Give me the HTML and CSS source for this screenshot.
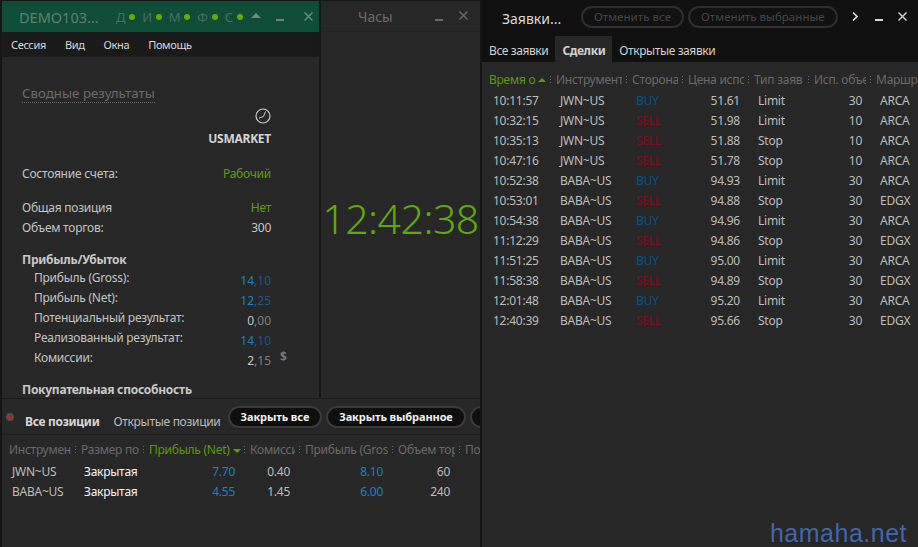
FILE: index.html
```html
<!DOCTYPE html>
<html lang="ru">
<head>
    <meta charset="UTF-8">
    <title>Сводные результаты</title>
    <link rel="stylesheet" href="styles.css">
</head>
<body>
    <div class="desktop">
        <div class="left-side">
            <div class="top-row">
                <div class="summary-win">
                    <div class="title-green">
                        <span class="title-name">DEMO103...</span>
                        <span class="leds">
                            <span class="led">Д</span>
                            <span class="led">И</span>
                            <span class="led">М</span>
                            <span class="led">Ф</span>
                            <span class="led">С</span>
                        </span>
                        <span class="arrow-up"></span>
                        <span class="win-min"></span>
                        <svg class="win-close" width="9" height="9" viewBox="0 0 9 9"><path d="M0.5 0.5L8.5 8.5M8.5 0.5L0.5 8.5" stroke="currentColor" stroke-width="1.4"/></svg>
                    </div>
                    <div class="menu">
                        <span>Сессия</span>
                        <span>Вид</span>
                        <span>Окна</span>
                        <span>Помощь</span>
                    </div>
                    <div class="summary">
                        <div class="summary-title"><span>Сводные результаты</span></div>
                        <div class="market">
                            <svg width="16" height="16" viewBox="0 0 16 16">
                                <circle cx="8" cy="8" r="7" fill="none" stroke="#c8c8c8" stroke-width="1.2"/>
                                <path d="M10.5 3.5 L8.5 8.5 L4 10" fill="none" stroke="#c8c8c8" stroke-width="1"/>
                            </svg>
                            <div class="market-name">USMARKET</div>
                        </div>
                        <div class="row state"><span>Состояние счета:</span><span class="green">Рабочий</span></div>
                        <div class="row pos"><span>Общая позиция</span><span class="green">Нет</span></div>
                        <div class="row"><span>Объем торгов:</span><span>300</span></div>
                        <div class="group-title">Прибыль/Убыток</div>
                        <div class="row sub"><span>Прибыль (Gross):</span><span class="num blue">14<i>,10</i></span></div>
                        <div class="row sub"><span>Прибыль (Net):</span><span class="num blue">12<i>,25</i></span></div>
                        <div class="row sub"><span>Потенциальный результат:</span><span class="num">0<i>,00</i></span></div>
                        <div class="row sub"><span>Реализованный результат:</span><span class="num blue">14<i>,10</i></span></div>
                        <div class="row sub"><span>Комиссии:</span><span class="num">2<i>,15</i><b class="dollar">$</b></span></div>
                        <div class="group-title buy-power">Покупательная способность</div>
                    </div>
                </div>
                <div class="clock-win">
                    <div class="title-dark">
                        <span class="clock-name">Часы</span>
                        <span class="win-min"></span>
                        <svg class="win-close" width="9" height="9" viewBox="0 0 9 9"><path d="M0.5 0.5L8.5 8.5M8.5 0.5L0.5 8.5" stroke="currentColor" stroke-width="1.4"/></svg>
                    </div>
                    <div class="clock-time">12:42:38</div>
                </div>
            </div>
            <div class="positions">
                <div class="pos-bar">
                    <span class="red-dot"></span>
                    <span class="pos-tab bold">Все позиции</span>
                    <span class="pos-tab">Открытые позиции</span>
                    <button class="pill">Закрыть все</button>
                    <button class="pill">Закрыть выбранное</button>
                    <button class="pill cut"></button>
                </div>
                <table class="grid pos-grid">
                    <colgroup>
                        <col class="p1"><col class="p2"><col class="p3"><col class="p4"><col class="p5"><col class="p6"><col class="p7">
                    </colgroup>
                    <tr>
                        <th><div>Инструмен</div></th>
                        <th><div>Размер поз</div></th>
                        <th class="sorted"><div>Прибыль (Net) <span class="caret-down"></span></div></th>
                        <th><div>Комисси</div></th>
                        <th><div>Прибыль (Gros</div></th>
                        <th><div>Объем тор</div></th>
                        <th class="last"><div>По</div></th>
                    </tr>
                    <tr>
                        <td>JWN~US</td><td class="white">Закрытая</td><td class="r blue">7.70</td><td class="r">0.40</td><td class="r blue">8.10</td><td class="r">60</td><td></td>
                    </tr>
                    <tr>
                        <td>BABA~US</td><td class="white">Закрытая</td><td class="r blue">4.55</td><td class="r">1.45</td><td class="r blue">6.00</td><td class="r">240</td><td></td>
                    </tr>
                </table>
            </div>
        </div>
        <div class="orders-win">
            <div class="orders-top">
                <span class="orders-name">Заявки...</span>
                <button class="pill off first">Отменить все</button>
                <button class="pill off">Отменить выбранные</button>
                <svg class="chev" width="6" height="9" viewBox="0 0 6 9"><path d="M1 0.5L5 4.5L1 8.5" fill="none" stroke="currentColor" stroke-width="1.6"/></svg>
                <span class="win-min bright"></span>
                <svg class="win-close bright" width="9" height="9" viewBox="0 0 9 9"><path d="M0.5 0.5L8.5 8.5M8.5 0.5L0.5 8.5" stroke="currentColor" stroke-width="1.4"/></svg>
            </div>
            <div class="orders-tabs">
                <span>Все заявки</span>
                <span class="tab-on">Сделки</span>
                <span>Открытые заявки</span>
            </div>
            <div class="orders-body">
                <table class="grid ord-grid">
                    <colgroup>
                        <col class="o1"><col class="o2"><col class="o3"><col class="o4"><col class="o5"><col class="o6"><col class="o7">
                    </colgroup>
                    <tr>
                        <th class="sorted"><div class="time-head">Время о<span class="caret-up"></span></div></th>
                        <th><div>Инструмент</div></th>
                        <th><div>Сторона</div></th>
                        <th><div>Цена испс</div></th>
                        <th><div>Тип заяв</div></th>
                        <th><div>Исп. объе</div></th>
                        <th class="last"><div>Маршр</div></th>
                    </tr>
                    <tr><td>10:11:57</td><td>JWN~US</td><td class="buy">BUY</td><td class="r">51.61</td><td>Limit</td><td class="r">30</td><td>ARCA</td></tr>
                    <tr><td>10:32:15</td><td>JWN~US</td><td class="sell">SELL</td><td class="r">51.98</td><td>Limit</td><td class="r">10</td><td>ARCA</td></tr>
                    <tr><td>10:35:13</td><td>JWN~US</td><td class="sell">SELL</td><td class="r">51.88</td><td>Stop</td><td class="r">10</td><td>ARCA</td></tr>
                    <tr><td>10:47:16</td><td>JWN~US</td><td class="sell">SELL</td><td class="r">51.78</td><td>Stop</td><td class="r">10</td><td>ARCA</td></tr>
                    <tr><td>10:52:38</td><td>BABA~US</td><td class="buy">BUY</td><td class="r">94.93</td><td>Limit</td><td class="r">30</td><td>ARCA</td></tr>
                    <tr><td>10:53:01</td><td>BABA~US</td><td class="sell">SELL</td><td class="r">94.88</td><td>Stop</td><td class="r">30</td><td>EDGX</td></tr>
                    <tr><td>10:54:38</td><td>BABA~US</td><td class="buy">BUY</td><td class="r">94.96</td><td>Limit</td><td class="r">30</td><td>ARCA</td></tr>
                    <tr><td>11:12:29</td><td>BABA~US</td><td class="sell">SELL</td><td class="r">94.86</td><td>Stop</td><td class="r">30</td><td>EDGX</td></tr>
                    <tr><td>11:51:25</td><td>BABA~US</td><td class="buy">BUY</td><td class="r">95.00</td><td>Limit</td><td class="r">30</td><td>ARCA</td></tr>
                    <tr><td>11:58:38</td><td>BABA~US</td><td class="sell">SELL</td><td class="r">94.89</td><td>Stop</td><td class="r">30</td><td>EDGX</td></tr>
                    <tr><td>12:01:48</td><td>BABA~US</td><td class="buy">BUY</td><td class="r">95.20</td><td>Limit</td><td class="r">30</td><td>ARCA</td></tr>
                    <tr><td>12:40:39</td><td>BABA~US</td><td class="sell">SELL</td><td class="r">95.66</td><td>Stop</td><td class="r">30</td><td>EDGX</td></tr>
                </table>
                <div class="watermark">hamaha.net</div>
            </div>
        </div>
    </div>
</body>
</html>
```

FILE: styles.css
```css
html, body {
    margin: 0;
    padding: 0;
    height: 100%;
    overflow: hidden;
}
body {
    font-family: "Noto Sans", "Open Sans", sans-serif;
    font-size: 12px;
    letter-spacing: -0.25px;
    background: #161616;
    color: #c4c4c4;
}
.desktop {
    display: flex;
    width: 918px;
    height: 547px;
    padding: 1px 0 0 2px;
    box-sizing: border-box;
}
.left-side {
    width: 478px;
    display: flex;
    flex-direction: column;
    overflow: hidden;
}
.top-row {
    display: flex;
    height: 397px;
}
.summary-win {
    width: 317px;
    background: #272727;
    overflow: hidden;
}
.title-green {
    display: flex;
    align-items: center;
    height: 31px;
    background: #0f4d38;
    color: #5f7f73;
}
.title-name {
    font-size: 14.5px;
    margin-left: 17px;
    width: 97px;
    letter-spacing: 0;
}
.leds {
    display: flex;
    gap: 7px;
}
.led {
    font-size: 13px;
    display: flex;
    align-items: center;
    gap: 4px;
    color: #4b6f61;
}
.led::after {
    content: "";
    width: 6px;
    height: 6px;
    border-radius: 50%;
    background: #6aa800;
}
.arrow-up {
    width: 0;
    height: 0;
    border-left: 5px solid transparent;
    border-right: 5px solid transparent;
    border-bottom: 5px solid #6d8a7e;
    margin-left: 8px;
    margin-top: -3px;
}
.win-min {
    width: 8px;
    height: 2px;
    background: #6a6a6a;
    margin-left: 15px;
    margin-top: 7px;
}
.title-green .win-min {
    background: #6d8a7e;
}
.win-close {
    color: #6a6a6a;
    margin-left: 20px;
    margin-top: -1px;
    flex: none;
}
.title-green .win-close {
    color: #6d8a7e;
}
.menu {
    display: flex;
    align-items: center;
    height: 25px;
    background: #1a1a1a;
    color: #d8d8d8;
    font-size: 11px;
    letter-spacing: -0.35px;
    padding-left: 9px;
    gap: 19px;
}
.summary {
    padding: 0 48px 0 20px;
}
.summary-title {
    margin-top: 26px;
    font-size: 13.3px;
    line-height: 20px;
    color: #6c6c6c;
    letter-spacing: 0;
}
.summary-title span {
    border-bottom: 1px dotted #6c6c6c;
}
.market {
    text-align: right;
    margin-top: 5px;
    height: 36px;
}
.market svg {
    display: block;
    margin-left: auto;
}
.market-name {
    font-weight: bold;
    color: #d4d4d4;
    line-height: 20px;
    margin-top: 5px;
}
.row {
    display: flex;
    justify-content: space-between;
    height: 20px;
    line-height: 20px;
}
.state {
    margin-top: 20px;
}
.pos {
    margin-top: 14px;
}
.green {
    color: #5f9e0a;
}
.blue {
    color: #1b7fcf;
}
.group-title {
    font-weight: bold;
    line-height: 20px;
    margin-top: 12px;
    color: #c8c8c8;
}
.group-title.buy-power {
    margin-top: 12px;
}
.sub {
    padding-left: 12px;
    margin-top: -2px;
    margin-bottom: 2px;
}
.group-title + .sub {
    margin-top: -2px;
}
.num {
    position: relative;
    top: 3px;
    letter-spacing: 0;
}
.num i {
    font-style: normal;
    opacity: 0.55;
}
.dollar {
    position: absolute;
    left: calc(100% + 9px);
    top: -4px;
    font-weight: bold;
    color: #777;
}
.clock-win {
    width: 159px;
    margin-left: 2px;
    background: #272727;
    overflow: hidden;
}
.title-dark {
    display: flex;
    align-items: center;
    height: 31px;
    border-bottom: 1px solid #222;
    box-sizing: border-box;
}
.clock-name {
    font-size: 14px;
    color: #6a6a6a;
    margin-left: 37px;
    width: 49px;
    letter-spacing: 0;
}
.title-dark .win-min {
    margin-left: 28px;
}
.title-dark .win-close {
    margin-left: 16px;
}
.clock-time {
    font-size: 41px;
    font-weight: 300;
    color: #5fa80f;
    line-height: 50px;
    margin-top: 161px;
    text-align: center;
    white-space: nowrap;
    letter-spacing: -0.5px;
}
.positions {
    flex: 1;
    background: #272727;
    border-top: 1px solid #1c1c1c;
    overflow: hidden;
}
.pos-bar {
    display: flex;
    align-items: center;
    height: 35px;
    border-bottom: 1px solid #1e1e1e;
    white-space: nowrap;
}
.red-dot {
    flex: none;
    width: 4px;
    height: 4px;
    border-radius: 50%;
    background: #d81414;
    border: 2px solid #505050;
    margin: 0 0 0 4px;
}
.pos-tab {
    margin: 10px 0 0 14px;
    color: #bcbcbc;
    font-size: 12px;
    letter-spacing: -0.3px;
}
.pos-tab.bold {
    margin-left: 11px;
    font-weight: bold;
    color: #d8d8d8;
}
.pill {
    font: inherit;
    font-weight: bold;
    letter-spacing: -0.1px;
    font-size: 11px;
    height: 22px;
    line-height: 18px;
    padding: 0 11px;
    color: #f0f0f0;
    background: #0e0e0e;
    border: 2px solid #3a3a3a;
    border-radius: 11px;
    margin-left: 4px;
    white-space: nowrap;
    flex: none;
}
.pos-tab + .pill {
    margin-left: 7px;
}
.pill.cut {
    width: 30px;
}
.pill.off {
    background: #111;
    border-color: #2e2e2e;
    color: #474747;
    font-size: 11.5px;
    font-weight: normal;
    letter-spacing: 0.05px;
}
.grid {
    border-collapse: collapse;
    table-layout: fixed;
}
.grid th {
    padding: 0 10px 0 0;
    font-weight: normal;
    color: #6a6a6a;
    text-align: left;
    background-image: repeating-linear-gradient(#666 0, #666 1px, transparent 1px, transparent 3px);
    background-size: 1px 9px;
    background-repeat: no-repeat;
    background-position: right 5px center;
}
.grid th.last {
    padding-right: 0;
    background-image: none;
}
.grid th div {
    overflow: hidden;
    white-space: nowrap;
    height: 20px;
    line-height: 20px;
}
.grid th.sorted {
    color: #5a9a0c;
}
.grid td {
    padding: 0 4px;
    height: 20px;
    line-height: 20px;
    white-space: nowrap;
    overflow: hidden;
    color: #bdbdbd;
}
.grid td.r {
    text-align: right;
    padding-right: 14px;
}
.grid td.white {
    color: #f4f4f4;
}
.grid td.blue {
    color: #1b7fcf;
}
.caret-down, .caret-up {
    display: inline-block;
    width: 0;
    height: 0;
    border-left: 4px solid transparent;
    border-right: 4px solid transparent;
}
.caret-down {
    border-top: 4px solid #5a9a0c;
    vertical-align: 1px;
}
.caret-up {
    flex: none;
    border-bottom: 4px solid #5a9a0c;
    margin-left: 3px;
}
.pos-grid {
    width: 472px;
    margin: 3px 0 0 7px;
}
.pos-grid th {
    height: 24px;
}
.pos-grid td {
    padding-left: 3px;
}
.pos-grid td.r {
    padding-right: 15px;
}
.pos-grid th.sorted {
    padding-right: 4px;
}
.p1 { width: 72px; }
.p2 { width: 68px; }
.p3 { width: 101px; }
.p4 { width: 55px; }
.p5 { width: 93px; }
.p6 { width: 67px; }
.p7 { width: 16px; }
.orders-win {
    width: 436px;
    margin-left: 2px;
    margin-top: -1px;
    background: #101010;
    display: flex;
    flex-direction: column;
}
.orders-top {
    display: flex;
    align-items: center;
    height: 33px;
    padding: 0 0 3px 20px;
    white-space: nowrap;
}
.orders-name {
    font-size: 14px;
    color: #d8d8d8;
    width: 79px;
    letter-spacing: 0;
    margin-top: 3px;
}
.pill.first {
    margin-left: 0;
}
.chev {
    flex: none;
    color: #d8d8d8;
    margin-left: 14px;
}
.win-min.bright {
    background: #d8d8d8;
    margin-left: 17px;
}
.win-close.bright {
    color: #d8d8d8;
    margin-left: 15px;
}
.orders-tabs {
    display: flex;
    height: 26px;
    line-height: 29px;
    color: #d0d0d0;
    letter-spacing: -0.4px;
}
.orders-tabs span {
    padding: 0 7px;
}
.tab-on {
    background: #272727;
    font-weight: bold;
}
.orders-body {
    flex: 1;
    background: #272727;
    position: relative;
}
.ord-grid {
    width: 429px;
    margin: 8px 0 0 7px;
}
.ord-grid th {
    height: 20px;
    padding-bottom: 1px;
}
.o1 { width: 67px; }
.o2 { width: 76px; }
.o3 { width: 56px; }
.o4 { width: 66px; }
.o5 { width: 60px; }
.o6 { width: 62px; }
.o7 { width: 42px; }
.time-head {
    display: flex;
    align-items: center;
}
.ord-grid th.sorted {
    padding-right: 4px;
}
.buy {
    color: #0d527f !important;
}
.sell {
    color: #7a0f1f !important;
}
.watermark {
    position: absolute;
    right: 11px;
    bottom: -1px;
    font-family: "Liberation Sans", Arial, sans-serif;
    font-size: 25px;
    letter-spacing: 0.5px;
    color: #3f66ad;
}
```
